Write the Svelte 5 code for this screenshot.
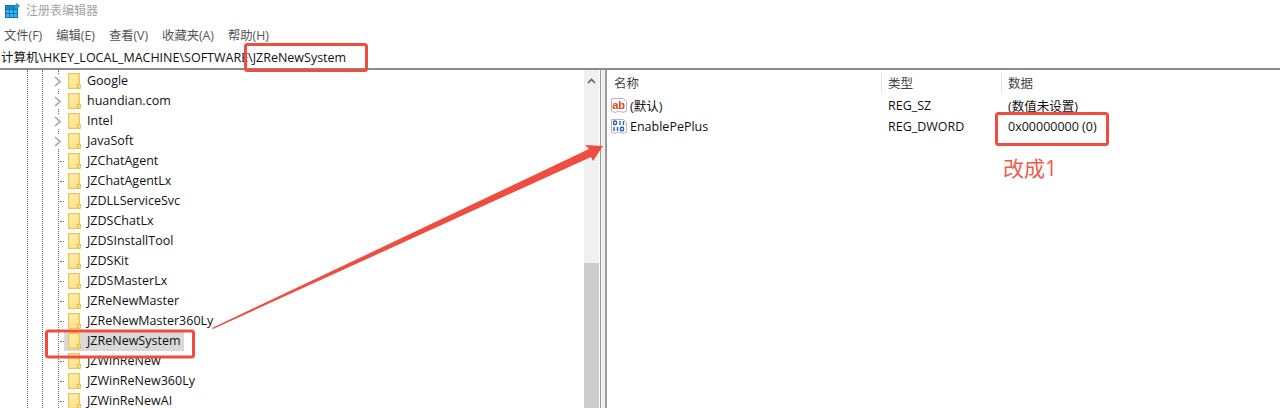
<script>
  const menus = ['文件(F)', '编辑(E)', '查看(V)', '收藏夹(A)', '帮助(H)']
  const keys = [
    { name: 'Google', arrow: true },
    { name: 'huandian.com', arrow: true },
    { name: 'Intel', arrow: true },
    { name: 'JavaSoft', arrow: true },
    { name: 'JZChatAgent' },
    { name: 'JZChatAgentLx' },
    { name: 'JZDLLServiceSvc' },
    { name: 'JZDSChatLx' },
    { name: 'JZDSInstallTool' },
    { name: 'JZDSKit' },
    { name: 'JZDSMasterLx' },
    { name: 'JZReNewMaster' },
    { name: 'JZReNewMaster360Ly' },
    { name: 'JZReNewSystem', selected: true },
    { name: 'JZWinReNew' },
    { name: 'JZWinReNew360Ly' },
    { name: 'JZWinReNewAI' }
  ]
  const cells = [0, 1, 2]
</script>

<div class="window">
  <div class="titlebar">
    <svg class="app-icon" width="15" height="15" viewBox="0 0 15 15">
      <rect x="0" y="2" width="13" height="13" fill="#0b74b5" />
      {#each cells as r}
        {#each cells as c}
          <rect x={1 + c * 4} y={3 + r * 4} width="3" height="3" fill={r === 0 ? '#1590d4' : '#35b6f2'} />
        {/each}
      {/each}
      <path d="M12 0 L15 3 L12 6 L9 3 Z" fill="#2a9ad6" />
    </svg>
    <span>注册表编辑器</span>
  </div>

  <div class="menubar">
    {#each menus as m}
      <span>{m}</span>
    {/each}
  </div>

  <div class="address">计算机\HKEY_LOCAL_MACHINE\SOFTWARE\JZReNewSystem</div>

  <div class="panes">
    <div class="tree">
      <div class="guide guide-a"></div>
      <div class="guide guide-b"></div>
      <div class="guide guide-c"></div>
      <div class="rows">
        {#each keys as k}
          <div class="row">
            <div class="expander">
              {#if k.arrow}
                <svg width="9" height="13" viewBox="0 0 9 13">
                  <path d="M2 2 L7 6.5 L2 11" fill="none" stroke="#a6a6a6" stroke-width="1.6" />
                </svg>
              {:else}
                <div class="dots"></div>
              {/if}
            </div>
            <div class="item" class:selected={k.selected}>
              <svg class="folder" width="13" height="16" viewBox="0 0 13 16">
                <defs>
                  <linearGradient id="folder-fill" x1="0" y1="0" x2="1" y2="1">
                    <stop offset="0" stop-color="#fdf0b4" />
                    <stop offset="1" stop-color="#fddf85" />
                  </linearGradient>
                </defs>
                <path d="M0.7 0.7 H11.3 V15.3 H0.7 Z" fill="url(#folder-fill)" stroke="#efc650" stroke-width="1.3" />
                <path d="M9.5 15.3 V11.5 H12.3 V15.3 Z" fill="#fde59a" stroke="#e9bd45" stroke-width="1.1" />
              </svg>
              <span class="label">{k.name}</span>
            </div>
          </div>
        {/each}
      </div>
      <div class="scrollbar">
        <svg class="up" width="9" height="6" viewBox="0 0 9 6">
          <path d="M1 5 L4.5 1.5 L8 5" fill="none" stroke="#606060" stroke-width="1.6" />
        </svg>
        <div class="thumb"></div>
      </div>
    </div>

    <div class="splitter"></div>

    <div class="values">
      <div class="head">
        <span class="col-name">名称</span>
        <span class="col-type">类型</span>
        <span class="col-data">数据</span>
      </div>
      <div class="value">
        <span class="col-name">
          <svg width="16" height="15" viewBox="0 0 16 15">
            <path d="M0.5 0.5 H12.5 L15.5 3.5 V13 L12 14.5 L8 13 L4 14.5 L0.5 13 Z" fill="#fff" stroke="#b5b5b5" />
            <text x="1.2" y="10.5" font-size="11" font-weight="700" font-family="'Liberation Sans', sans-serif" fill="#d8481f">ab</text>
          </svg>
          (默认)
        </span>
        <span class="col-type">REG_SZ</span>
        <span class="col-data">(数值未设置)</span>
      </div>
      <div class="value">
        <span class="col-name">
          <svg width="16" height="15" viewBox="0 0 16 15">
            <path d="M0.5 0.5 H12.5 L15.5 3.5 V13 L12 14.5 L8 13 L4 14.5 L0.5 13 Z" fill="#fff" stroke="#b5b5b5" />
            <g fill="none" stroke="#2a5fc4" stroke-width="1.4">
              <rect x="2.5" y="2" width="3" height="3.5" rx="1" />
              <path d="M9 2 V6 M12.5 2 V6" />
              <path d="M3 8 V12 M6.5 8 V12" />
              <rect x="9.5" y="8.2" width="3" height="3.5" rx="1" />
            </g>
          </svg>
          EnablePePlus
        </span>
        <span class="col-type">REG_DWORD</span>
        <span class="col-data">0x00000000 (0)</span>
      </div>
    </div>
  </div>

  <div class="note">改成1</div>

  <svg class="marks" width="1280" height="408" viewBox="0 0 1280 408">
    <g fill="none" stroke="#ee4d40" stroke-width="3">
      <rect x="245.5" y="44.5" width="121" height="26" rx="2" />
      <rect x="46.5" y="331" width="147" height="26" rx="2" />
      <rect x="996.5" y="113.5" width="111" height="31" rx="2" />
    </g>
    <path d="M212 328 L589 149 L585 145 L603 146 L593 161 L591 157 L213 329 Z" fill="#ee4d40" />
  </svg>
</div>

<style>
  :global(body) {
    margin: 0;
    background: #fff;
  }

  .window {
    position: relative;
    width: 1280px;
    height: 408px;
    overflow: hidden;
    font-family: "Open Sans", "Noto Sans CJK SC", sans-serif;
    font-size: 12.5px;
    color: #111;
  }

  .titlebar {
    display: flex;
    align-items: center;
    gap: 6px;
    height: 20px;
    padding: 0 0 2px 5px;
    color: #a3a3a3;
    font-size: 12px;
  }

  .menubar {
    display: flex;
    gap: 14px;
    align-items: center;
    height: 21px;
    padding: 2px 0 0 4px;
    color: #555;
    font-size: 12.3px;
  }

  .address {
    height: 23px;
    line-height: 26px;
    padding-left: 1px;
    border-bottom: 2px solid #8a8a8a;
    font-size: 12.5px;
    white-space: nowrap;
  }

  .panes {
    display: flex;
    height: 338px;
  }

  .tree {
    position: relative;
    display: flex;
    width: 600px;
  }

  .guide {
    position: absolute;
    top: 0;
    bottom: 0;
    border-left: 1px dotted #707070;
  }

  .guide-a { left: 27px; }
  .guide-b { left: 42px; }
  .guide-c { left: 58px; }

  .rows {
    position: relative;
    flex: 1;
    padding-top: 1px;
    padding-left: 52px;
  }

  .row {
    display: flex;
    align-items: center;
    height: 20px;
  }

  .expander {
    display: flex;
    align-items: center;
    width: 12px;
    height: 20px;
    flex: none;
  }

  .expander svg {
    margin-left: 1px;
    background: #fff;
  }

  .dots {
    width: 6px;
    margin-left: 8px;
    border-top: 1px dotted #707070;
  }

  .item {
    display: flex;
    align-items: center;
    height: 20px;
    padding: 0 4px;
  }

  .item.selected {
    background: #d9d9d9;
  }

  .folder {
    flex: none;
  }

  .label {
    margin-left: 6px;
    padding-bottom: 2px;
  }

  .scrollbar {
    position: relative;
    display: flex;
    flex-direction: column;
    justify-content: flex-end;
    width: 15px;
    margin-right: 1px;
    background: #f0f0f0;
  }

  .up {
    position: absolute;
    top: 8px;
    left: 3px;
  }

  .thumb {
    height: 145px;
    background: #cdcdcd;
  }

  .splitter {
    flex: none;
    width: 4px;
    background: #f0f0f0;
    border-left: 1px solid #9a9a9f;
    border-right: 2px solid #9a9a9f;
  }

  .values {
    flex: 1;
  }

  .head,
  .value {
    display: flex;
    align-items: center;
    padding-left: 5px;
  }

  .head {
    height: 25px;
    color: #444;
  }

  .head .col-type,
  .head .col-data {
    border-left: 1px solid #e3e3e3;
  }

  .value {
    height: 21px;
  }

  .col-name {
    display: flex;
    align-items: center;
    gap: 3px;
    width: 269px;
    padding-left: 2px;
    box-sizing: border-box;
  }

  .value svg {
    margin-left: -3px;
  }

  .col-type {
    width: 120px;
    padding-left: 6px;
    box-sizing: border-box;
  }

  .col-data {
    padding-left: 6px;
  }

  .value .col-type,
  .value .col-data {
    padding-left: 7px;
  }

  .note {
    position: absolute;
    left: 1003px;
    top: 154px;
    font-size: 21px;
    line-height: 28px;
    color: #ef5a4c;
  }

  .marks {
    position: absolute;
    inset: 0;
    pointer-events: none;
  }
</style>
